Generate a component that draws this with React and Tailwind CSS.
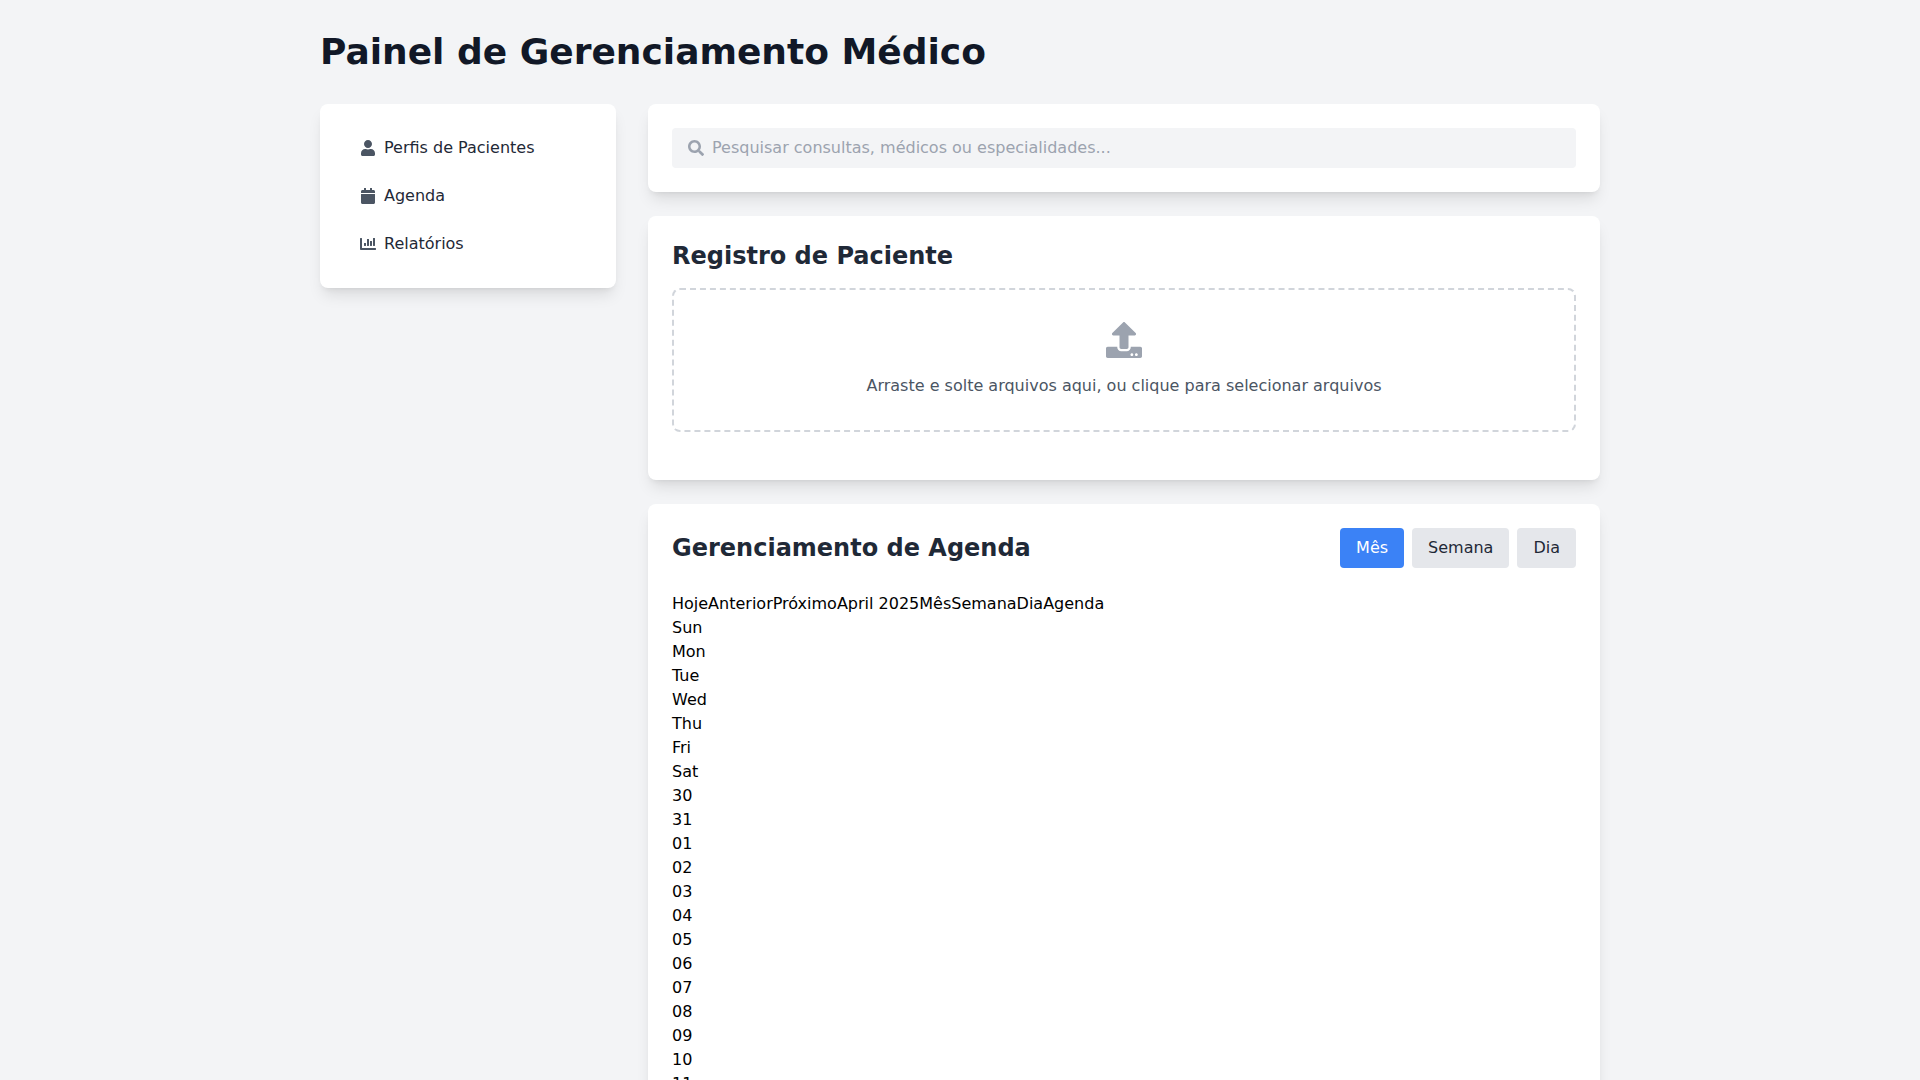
import React from "react";
import { FaUser, FaCalendar, FaChartBar, FaSearch, FaUpload } from "react-icons/fa";

const nav = [
  { icon: FaUser, label: "Perfis de Pacientes" },
  { icon: FaCalendar, label: "Agenda" },
  { icon: FaChartBar, label: "Relatórios" },
];
const days = ["Sun", "Mon", "Tue", "Wed", "Thu", "Fri", "Sat"];
const dates = ["30", "31", "01", "02", "03", "04", "05", "06", "07", "08", "09", "10", "11", "12", "13", "14", "15", "16", "17", "18", "19", "20", "21", "22", "23", "24", "25", "26", "27", "28", "29", "30", "01", "02", "03"];

export default function App() {
  return (
    <div className="min-h-screen bg-[#f3f4f6] font-['DejaVu_Sans',sans-serif] text-black">
      <div className="mx-auto w-[1280px] pt-8 pb-8">
        <h1 className="mb-8 text-4xl font-bold text-[#111827]">Painel de Gerenciamento Médico</h1>
        <div className="grid grid-cols-4 gap-8">
          <aside className="col-span-1 self-start">
            <nav className="rounded-lg bg-white py-5 pl-10 pr-5 shadow-lg">
              {nav.map(({ icon: Icon, label }) => (
                <a key={label} className="flex items-center gap-2 py-3 text-[#1f2937]">
                  <Icon className="h-4 w-4 text-[#4b5563]" />
                  <span>{label}</span>
                </a>
              ))}
            </nav>
          </aside>
          <main className="col-span-3 flex flex-col gap-6">
            <section className="rounded-lg bg-white p-6 shadow-lg">
              <div className="relative">
                <FaSearch className="absolute left-4 top-3 h-4 w-4 text-[#9ca3af]" />
                <div className="h-10 w-full rounded bg-[#f3f4f6] py-2 pl-10 pr-4">
                  <span className="block leading-6 text-[#9ca3af]">Pesquisar consultas, médicos ou especialidades...</span>
                </div>
              </div>
            </section>
            <section className="rounded-lg bg-white p-6 shadow-lg">
              <h2 className="mb-4 text-2xl font-bold text-[#1f2937]">Registro de Paciente</h2>
              <div className="mb-6 flex flex-col items-center rounded-lg border-2 border-dashed border-[#d1d5db] p-8 text-center">
                <FaUpload className="mb-4 h-9 w-9 text-[#9ca3af]" />
                <p className="text-[#4b5563]">Arraste e solte arquivos aqui, ou clique para selecionar arquivos</p>
              </div>
            </section>
            <section className="rounded-lg bg-white p-6 shadow-lg">
              <div className="mb-6 flex items-center justify-between">
                <h2 className="text-2xl font-bold text-[#1f2937]">Gerenciamento de Agenda</h2>
                <div className="flex gap-2">
                  <button className="rounded bg-[#3b82f6] px-4 py-2 text-white">Mês</button>
                  <button className="rounded bg-[#e5e7eb] px-4 py-2 text-[#1f2937]">Semana</button>
                  <button className="rounded bg-[#e5e7eb] px-4 py-2 text-[#1f2937]">Dia</button>
                </div>
              </div>
              <div>HojeAnteriorPróximoApril 2025MêsSemanaDiaAgenda</div>
              {days.map((d) => (<div key={d}>{d}</div>))}
              {dates.map((d, i) => (<div key={i}>{d}</div>))}
            </section>
          </main>
        </div>
      </div>
    </div>
  );
}
